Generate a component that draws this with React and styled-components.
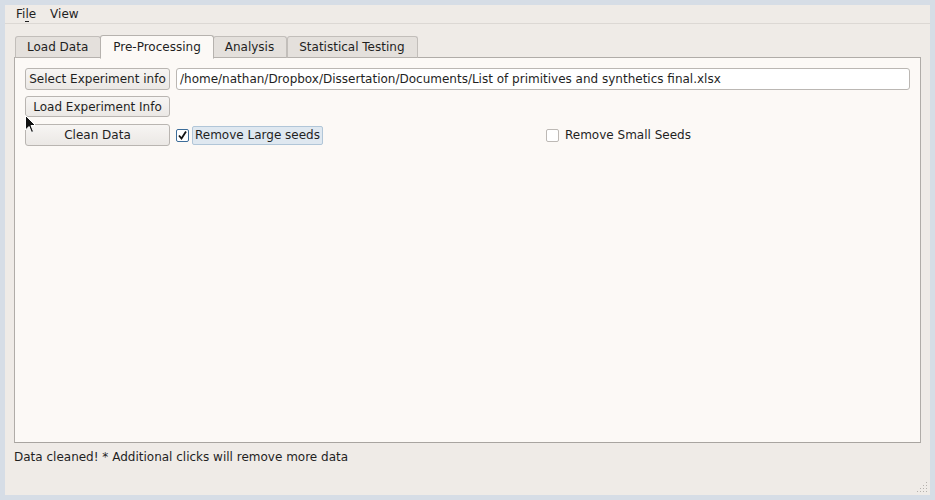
import React from 'react';
import styled, { createGlobalStyle } from 'styled-components';

const GlobalStyle = createGlobalStyle`
  html, body {
    margin: 0;
    padding: 0;
    background: #d6dde6;
  }
  body {
    font-family: "DejaVu Sans", "Liberation Sans", sans-serif;
    font-size: 12px;
    color: #1f1f1f;
  }
`;

const Frame = styled.div`
  width: 935px;
  height: 500px;
  padding: 5px;
  box-sizing: border-box;
`;

const Window = styled.div`
  position: relative;
  width: 925px;
  height: 490px;
  background: #efebe7;
  display: flex;
  flex-direction: column;
`;

const MenuBar = styled.div`
  height: 18px;
  display: flex;
  align-items: center;
  padding-left: 11px;
  gap: 14px;
  border-bottom: 1px solid #dcd8d4;
  font-size: 12px;
`;

const MenuItem = styled.span`
  line-height: 16px;
  & u {
    text-decoration: none;
    border-bottom: 1px solid #1f1f1f;
  }
`;

const TabWidget = styled.div`
  margin: 10px 9px 0 9px;
  display: flex;
  flex-direction: column;
`;

const TabBar = styled.div`
  display: flex;
  align-items: flex-end;
  height: 24px;
  padding-left: 1px;
  position: relative;
  z-index: 1;
`;

const Tab = styled.div`
  height: ${p => (p.$active ? '24px' : '22px')};
  box-sizing: border-box;
  padding: ${p => (p.$active ? '0 12px 1px 12px' : '0 12px 0 11px')};
  margin-left: ${p => (p.$active ? '-1px' : '0')};
  margin-right: ${p => (p.$active ? '-1px' : '0')};
  display: flex;
  align-items: center;
  font-size: 12px;
  white-space: nowrap;
  background: ${p => (p.$active ? '#fcf9f6' : '#e4e0dc')};
  border: 1px solid ${p => (p.$active ? '#b6b2ae' : '#c2beba')};
  border-bottom: ${p => (p.$active ? '1px solid #fcf9f6' : '1px solid #b6b2ae')};
  border-radius: 3px 3px 0 0;
  position: relative;
  z-index: ${p => (p.$active ? 2 : 1)};
  margin-bottom: ${p => (p.$active ? '-1px' : '0')};
`;

const Pane = styled.div`
  height: 386px;
  box-sizing: border-box;
  background: #fcf9f6;
  border: 1px solid #b0aca8;
  border-bottom-color: #a8a4a0;
  margin-top: -1px;
  padding: 10px 10px;
`;

const Grid = styled.div`
  display: grid;
  grid-template-columns: 145px 1fr;
  grid-auto-rows: 22px;
  column-gap: 6px;
  row-gap: 6px;
`;

const Button = styled.button`
  font-family: "DejaVu Sans", "Liberation Sans", sans-serif;
  font-size: 12px;
  color: #1f1f1f;
  height: ${p => (p.$tall ? '22px' : '21px')};
  padding: 0;
  white-space: nowrap;
  box-sizing: border-box;
  background: linear-gradient(#f7f5f3, #ebe8e5);
  border: 1px solid #b9b5b1;
  border-radius: 3px;
  text-align: center;
`;

const PathField = styled.div`
  height: 22px;
  box-sizing: border-box;
  background: #ffffff;
  border: 1px solid #bbb7b3;
  border-radius: 3px;
  display: flex;
  align-items: center;
  padding-left: 3px;
  font-size: 12px;
  white-space: nowrap;
`;

const OptionRow = styled.div`
  display: grid;
  grid-template-columns: 1fr 1fr;
  column-gap: 6px;
  align-items: center;
`;

const CheckOption = styled.label`
  display: flex;
  align-items: center;
  font-size: 12px;
  gap: 3px;
`;

const Box = styled.span`
  width: 13px;
  height: 13px;
  box-sizing: border-box;
  background: #ffffff;
  border: 1px solid ${p => (p.$checked ? '#3d6d99' : '#bdb9b5')};
  border-radius: 2px;
  display: flex;
  align-items: center;
  justify-content: center;
`;

const LabelText = styled.span`
  padding: 1px 2px;
  border-radius: 2px;
  background: ${p => (p.$focus ? '#dfe8f0' : 'transparent')};
  border: 1px solid ${p => (p.$focus ? '#b1c6d8' : 'transparent')};
  line-height: 15px;
`;

const Status = styled.div`
  margin: 6px 0 0 9px;
  font-size: 12px;
  line-height: 16px;
`;

const Grip = styled.svg`
  position: absolute;
  right: 2px;
  bottom: 2px;
`;

const Cursor = styled.svg`
  position: absolute;
  left: 20px;
  top: 110px;
`;

function Checkbox({ checked, focus, children }) {
  return (
    <CheckOption>
      <Box $checked={checked}>
        {checked && (
          <svg width="9" height="9" viewBox="0 0 9 9">
            <path d="M1 4.5 L3.5 7.5 L8 0.5" fill="none" stroke="#111" strokeWidth="1.8" />
          </svg>
        )}
      </Box>
      <LabelText $focus={focus}>{children}</LabelText>
    </CheckOption>
  );
}

export default function App() {
  return (
    <Frame>
      <GlobalStyle />
      <Window>
        <MenuBar>
          <MenuItem>Fi<u>l</u>e</MenuItem>
          <MenuItem>View</MenuItem>
        </MenuBar>
        <TabWidget>
          <TabBar>
            <Tab>Load Data</Tab>
            <Tab $active>Pre-Processing</Tab>
            <Tab>Analysis</Tab>
            <Tab>Statistical Testing</Tab>
          </TabBar>
          <Pane>
            <Grid>
              <Button $tall>Select Experiment info</Button>
              <PathField>/home/nathan/Dropbox/Dissertation/Documents/List of primitives and synthetics final.xlsx</PathField>
              <Button>Load Experiment Info</Button>
              <span />
              <Button $tall>Clean Data</Button>
              <OptionRow>
                <Checkbox checked focus>Remove Large seeds</Checkbox>
                <Checkbox>Remove Small Seeds</Checkbox>
              </OptionRow>
            </Grid>
          </Pane>
        </TabWidget>
        <Status>Data cleaned! * Additional clicks will remove more data</Status>
        <Cursor width="12" height="20" viewBox="0 0 12 20">
          <path d="M0.5 0.5 L0.5 15 L4 11.5 L6.5 17.5 L8.5 16.5 L6 10.5 L10.5 10.5 Z" fill="#111" stroke="#fff" strokeWidth="1" />
        </Cursor>
        <Grip width="12" height="12" viewBox="0 0 12 12">
          {[[10, 1], [7, 4], [10, 4], [4, 7], [7, 7], [10, 7], [1, 10], [4, 10], [7, 10], [10, 10]].map(([x, y]) => (
            <rect key={`${x}-${y}`} x={x} y={y} width="1" height="1" fill="#b5b1ad" />
          ))}
        </Grip>
      </Window>
    </Frame>
  );
}
